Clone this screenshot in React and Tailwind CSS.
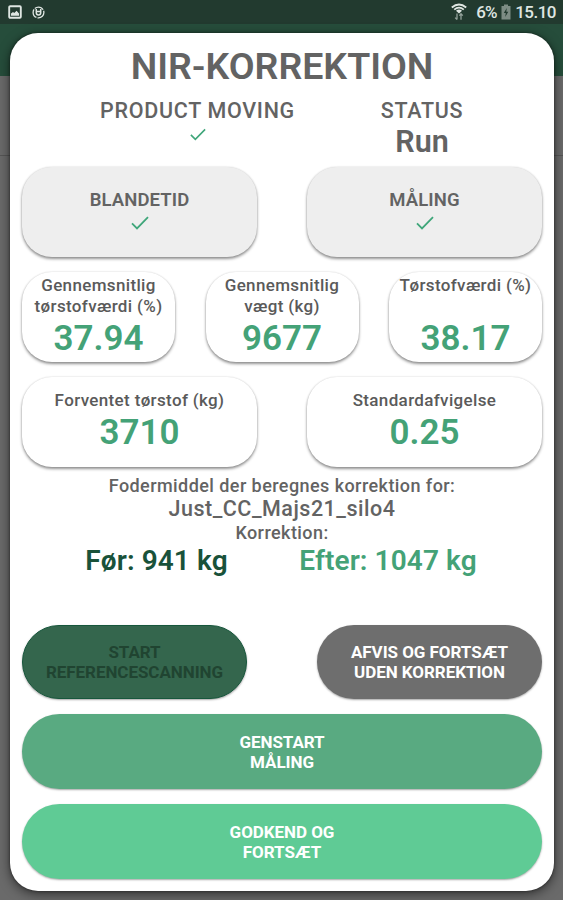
import React from 'react';

const Check = ({ className }) => (
  <svg viewBox="0 0 18 14" fill="none" stroke="#3fa67a" strokeWidth="1.8" className={className}>
    <path d="M1 7.4 L6 12.4 L17 1.2" />
  </svg>
);

const StatusBar = () => (
  <div className="flex h-6 items-center justify-between bg-[#223a2f] pl-2 pr-[7px] text-[#dfe6e2]">
    <div className="flex items-center gap-[10px]">
      <svg viewBox="0 0 14 14" className="h-[14px] w-[14px]">
        <rect x="1.2" y="1.2" width="11.6" height="11.6" rx="1" fill="none" stroke="currentColor" strokeWidth="1.9" />
        <path d="M3 10.8 V8.4 L5 7 L6.2 8 L8.6 5.8 L11 8.4 V10.8 Z" fill="currentColor" />
      </svg>
      <svg viewBox="0 0 14 14" className="h-[13px] w-[13px]" fill="none" stroke="currentColor">
        <circle cx="7" cy="7" r="5.8" strokeWidth="1.4" strokeDasharray="10 1.2" />
        <path d="M4.6 3.2 V7.4 A2.4 2.4 0 0 0 9.4 7.4 V3.2 M4.4 6 H9.6" strokeWidth="1.6" />
      </svg>
    </div>
    <div className="flex items-center">
      <svg viewBox="0 0 16 18" className="mr-[9px] h-[18px] w-4" fill="none" stroke="currentColor">
        <path d="M0.8 4.4 Q8 -1.6 15.2 4.4" strokeWidth="1.9" />
        <path d="M3.2 6.6 Q8 2.6 12.8 6.6" strokeWidth="1.8" />
        <path d="M5 7.8 Q8 5.4 11 7.8 L8 10.6 Z" fill="currentColor" stroke="none" />
        <path d="M6 10.5 V16.5 M4.2 14.6 L6 16.6 M10 16.8 V10.8 M8.4 12.6 L10 10.8 L11.8 12.6" strokeWidth="1.3" opacity="0.6" />
      </svg>
      <span className="w-[22px] text-[17px] font-medium leading-6 tracking-[-0.9px]">6%</span>
      <svg viewBox="0 0 10 16" className="ml-[3px] mr-1 h-4 w-[10px]">
        <path d="M3 0.5 H7 V2 H9.5 V15.5 H0.5 V2 H3 Z" fill="#7d8c84" />
        <path d="M5.8 4 L2.8 9 H4.8 L4.2 13 L7.3 7.8 H5.3 Z" fill="#223a2f" />
      </svg>
      <span className="text-[17px] font-medium leading-6 tracking-[-0.5px]">15.10</span>
    </div>
  </div>
);

const StepCard = ({ title }) => (
  <div className="flex h-[90px] w-[235px] flex-col items-center rounded-[30px] bg-[#eeeeee] pt-[21px] shadow-[0_2px_3px_rgba(0,0,0,0.42),0_0_2px_rgba(0,0,0,0.15)]">
    <div className="text-[18.5px] font-semibold leading-6 tracking-[0.1px]">{title}</div>
    <Check className="mt-1 h-[14px] w-[18px]" />
  </div>
);

const ValueCard = ({ label, value, wide }) => (
  <div
    className={`flex h-[90px] flex-col items-center rounded-[30px] bg-white text-center shadow-[0_2px_3px_rgba(0,0,0,0.42),0_0_2px_rgba(0,0,0,0.15)] ${
      wide ? 'w-[235px] pt-[13px]' : 'w-[153px] pt-[3px]'
    }`}
  >
    <div
      className={`whitespace-pre text-[17px] leading-[21px] tracking-[0.35px] text-[#5a5a5a] ${
        wide ? 'h-[22px]' : 'h-[43px]'
      }`}
    >
      {label}
    </div>
    <div className="text-[35px] font-semibold leading-[42px] text-[#44a277]">{value}</div>
  </div>
);

const Button = ({ children, className }) => (
  <button
    className={`whitespace-pre rounded-[38px] text-center text-[17px] font-bold leading-5 tracking-[-0.05px] shadow-[0_1px_2px_rgba(0,0,0,0.35)] ${className}`}
  >
    {children}
  </button>
);

const App = () => {
  return (
    <div className="relative h-[900px] w-[563px] overflow-hidden bg-[#6a6a6a] font-['Roboto',sans-serif]">
      <StatusBar />
      <div className="h-[52px] bg-[#264d3b]" />
      <div className="h-[80px] border-b border-[#565656]" />

      <div className="absolute left-[10px] top-[33px] h-[858px] w-[544px] rounded-[28px] bg-white px-3 pt-[13px] font-medium text-[#636363] shadow-[0_3px_12px_rgba(0,0,0,0.55),0_0_3px_rgba(0,0,0,0.5)]">
        <h1 className="text-center text-[37.5px] font-semibold leading-10">NIR-KORREKTION</h1>

        <div className="mt-[11px] flex h-[70px]">
          <div className="flex w-[351px] shrink-0 flex-col items-center">
            <div className="text-[21.5px] leading-7 tracking-[0.7px]">PRODUCT MOVING</div>
            <Check className="mt-[3px] h-[13px] w-4" />
          </div>
          <div className="flex w-[98px] shrink-0 flex-col items-center">
            <div className="text-[21.5px] leading-7 tracking-[0.7px]">STATUS</div>
            <div className="-mt-px text-[30.5px] font-semibold leading-9">Run</div>
          </div>
        </div>

        <div className="flex justify-between">
          <StepCard title="BLANDETID" />
          <StepCard title="MÅLING" />
        </div>

        <div className="mt-[15px] flex justify-between">
          <ValueCard label={'Gennemsnitlig\ntørstofværdi (%)'} value="37.94" />
          <ValueCard label={'Gennemsnitlig\nvægt (kg)'} value="9677" />
          <ValueCard label="Tørstofværdi (%)" value="38.17" />
        </div>

        <div className="mt-[15px] flex justify-between">
          <ValueCard wide label="Forventet tørstof (kg)" value="3710" />
          <ValueCard wide label="Standardafvigelse" value="0.25" />
        </div>

        <div className="mt-2 flex flex-col items-center">
          <div className="text-[18px] leading-[22px] tracking-[0.43px]">Fodermiddel der beregnes korrektion for:</div>
          <div className="text-[21.5px] leading-6 tracking-[0.5px]">Just_CC_Majs21_silo4</div>
          <div className="text-[18px] leading-6 tracking-[0.43px]">Korrektion:</div>
        </div>
        <div className="flex text-[28px] font-semibold leading-8 tracking-[0.1px]">
          <div className="w-[269px] text-center text-[#19523a]">Før: 941 kg</div>
          <div className="w-[194px] text-center text-[#44a277]">Efter: 1047 kg</div>
        </div>

        <div className="mt-12 flex justify-between">
          <Button className="h-[74px] w-[225px] border border-[#17573c] bg-[#34664d] text-[#204431]">
            {'START\nREFERENCESCANNING'}
          </Button>
          <Button className="h-[74px] w-[225px] bg-[#6e6e6e] text-white">{'AFVIS OG FORTSÆT\nUDEN KORREKTION'}</Button>
        </div>
        <Button className="mt-[15px] h-[75px] w-full bg-[#59aa81] text-white">{'GENSTART\nMÅLING'}</Button>
        <Button className="mt-[15px] h-[75px] w-full bg-[#5fcb95] text-white">{'GODKEND OG\nFORTSÆT'}</Button>
      </div>
    </div>
  );
};

export default App;
